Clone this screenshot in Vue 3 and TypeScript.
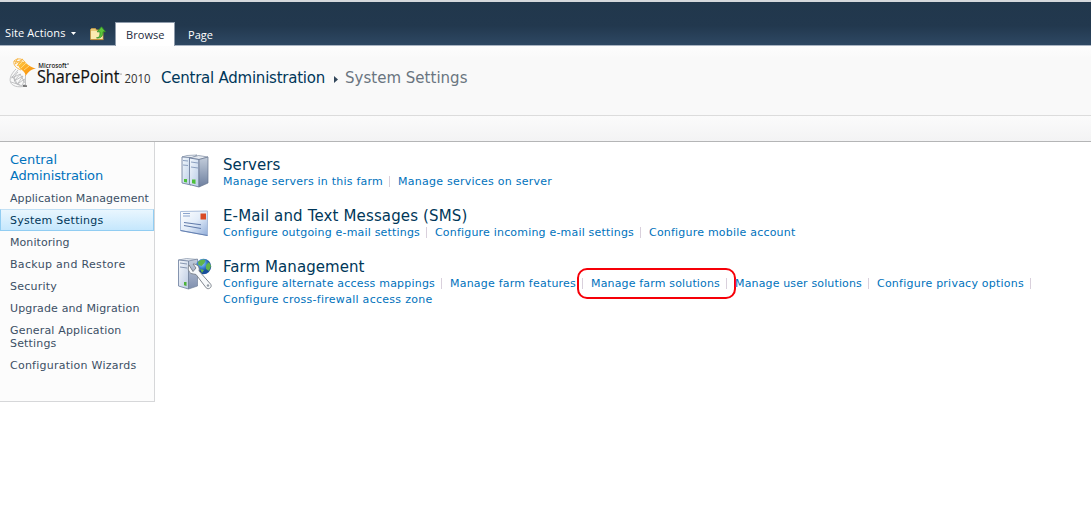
<script setup lang="ts">
import type { Directive } from 'vue'

interface Label { text: string; width: number }
interface NavItem { lines: Label[]; active?: boolean }
interface LinkItem extends Label { marked?: boolean; last?: boolean }
interface Section { icon: 'servers' | 'mail' | 'farm'; title: Label; links: LinkItem[] }

// Tracks a label out or in so that it occupies the given width.
const vFit: Directive<HTMLElement, number> = {
  mounted(el, { value }) {
    const natural = el.getBoundingClientRect().width
    const count = (el.textContent ?? '').length
    if (count > 1) el.style.letterSpacing = `${(value - natural) / count}px`
  },
}

const nav: NavItem[] = [
  { lines: [{ text: 'Application Management', width: 139 }] },
  { lines: [{ text: 'System Settings', width: 93.5 }], active: true },
  { lines: [{ text: 'Monitoring', width: 59.5 }] },
  { lines: [{ text: 'Backup and Restore', width: 115.5 }] },
  { lines: [{ text: 'Security', width: 47 }] },
  { lines: [{ text: 'Upgrade and Migration', width: 129.5 }] },
  { lines: [{ text: 'General Application', width: 111.5 }, { text: 'Settings', width: 46.5 }] },
  { lines: [{ text: 'Configuration Wizards', width: 126.5 }] },
]

const sections: Section[] = [
  {
    icon: 'servers',
    title: { text: 'Servers', width: 57.5 },
    links: [
      { text: 'Manage servers in this farm', width: 160 },
      { text: 'Manage services on server', width: 154, last: true },
    ],
  },
  {
    icon: 'mail',
    title: { text: 'E-Mail and Text Messages (SMS)', width: 244.5 },
    links: [
      { text: 'Configure outgoing e-mail settings', width: 197 },
      { text: 'Configure incoming e-mail settings', width: 199 },
      { text: 'Configure mobile account', width: 146.5, last: true },
    ],
  },
  {
    icon: 'farm',
    title: { text: 'Farm Management', width: 141.5 },
    links: [
      { text: 'Configure alternate access mappings', width: 212 },
      { text: 'Manage farm features', width: 126 },
      { text: 'Manage farm solutions', width: 129, marked: true },
      { text: 'Manage user solutions', width: 127 },
      { text: 'Configure privacy options', width: 147 },
      { text: 'Configure cross-firewall access zone', width: 209.5, last: true },
    ],
  },
]
</script>

<template>
  <div class="page">
    <header class="ribbon">
      <div class="actions">
        <span v-fit="60.5">Site Actions</span>
        <svg class="caret" width="5" height="3" viewBox="0 0 5 3"><path d="M0 0h5L2.5 3z" fill="#fff" /></svg>
      </div>
      <svg class="up" width="16" height="15" viewBox="0 0 16 15">
        <path d="M.5 3.5 1.5 2.500h4l1 1.500h6.500v9.500H.5z" fill="#e9c877" stroke="#c99c45" stroke-width=".8" />
        <path d="M1 5h11.500v8.500H1z" fill="#fbe9b0" />
        <path d="M1 13.600h12.500" stroke="#c18d35" />
        <path d="M6.500 11.800c3 .2 3.500-2 3.500-6H7.200L11.500.8l4 5H13c0 4-2 7-6.500 6z" fill="#5dc53b" stroke="#2d8d25" stroke-width=".8" />
      </svg>
      <div class="tab"><span v-fit="38.500">Browse</span></div>
      <div class="tab-plain"><span v-fit="25">Page</span></div>
    </header>

    <div class="titlebar">
      <svg class="logo" width="145" height="34" viewBox="0 0 145 34">
        <defs>
          <linearGradient id="flame" x1="0" y1="0" x2="1" y2="1">
            <stop offset="0" stop-color="#ffcf4d" /><stop offset=".5" stop-color="#fca41c" /><stop offset="1" stop-color="#f58a0a" />
          </linearGradient>
        </defs>
        <g fill="none" stroke="#b4b5b7" stroke-width=".8">
          <path d="M7 12C3 16 0 21 1.500 25s7 6 15 4" />
          <path d="M9 15c-4 4-5 8-2 11s7 3 10 1" />
          <path d="M9 13 2.500 21l9-4-6.500 7 9-5-5.500 8 7-5-2 6M2 25l9 3M3 19l5 7M11 17l5 9M16.500 18v10" />
          <path d="m14 28.800 4 .4" stroke="#444" stroke-width="1.300" />
        </g>
        <path d="M8.500 7C11 4 14 4 17 6c3 3 6 4.500 10 5.500-4 .5-7 2.500-10.500 7.500 0-2-1-4-3-5.500-3-2-4-4-5-6.500z" fill="url(#flame)" />
        <g fill="none" stroke="#f7b23c" stroke-width=".9">
          <path d="M5 4c3-3 8-3 11 1M5 4c-1 4 2 7 7 9M8.500 1.500 6 7l8-5-6 7M5 4l12 2" />
        </g>
        <path d="m10 8 4-4M12 11l5-5M15 13l5-4" fill="none" stroke="#ffe6a0" stroke-width=".7" />
        <text class="brand-small" x="29.300" y="11.300" textLength="28.500" lengthAdjust="spacingAndGlyphs">Microsoft</text>
        <circle cx="59" cy="7" r=".8" fill="#333" />
        <text class="brand" x="28" y="25.800" textLength="82.500" lengthAdjust="spacingAndGlyphs">SharePoint</text>
        <circle cx="112" cy="17" r=".6" fill="#444" />
        <text class="year" x="115.500" y="25.800" textLength="26" lengthAdjust="spacingAndGlyphs">2010</text>
      </svg>
      <div class="crumbs">
        <span v-fit="164">Central Administration</span>
        <svg class="chevron" width="4" height="7" viewBox="0 0 4 7"><path d="M0 0 4 3.500 0 7z" fill="#33475b" /></svg>
        <span v-fit="122.500" class="current">System Settings</span>
      </div>
    </div>
    <div class="toolbar"></div>

    <div class="body">
      <nav class="sidebar">
        <div class="nav-head">
          <div><span v-fit="47">Central</span></div>
          <div><span v-fit="93">Administration</span></div>
        </div>
        <div v-for="(item, i) in nav" :key="i" class="nav-item" :class="{ active: item.active }">
          <div v-for="line in item.lines" :key="line.text"><span v-fit="line.width">{{ line.text }}</span></div>
        </div>
      </nav>

      <main class="content">
        <section v-for="section in sections" :key="section.icon" class="section">
          <svg v-if="section.icon === 'servers'" class="icon" width="36" height="38" viewBox="0 0 36 38">
            <defs>
              <linearGradient id="face" x1="0" y1="0" x2="1" y2="1"><stop offset="0" stop-color="#f4f9fd" /><stop offset="1" stop-color="#b7cbe6" /></linearGradient>
              <linearGradient id="side" x1="0" y1="0" x2="0" y2="1"><stop offset="0" stop-color="#c3cddb" /><stop offset="1" stop-color="#6d7f9f" /></linearGradient>
            </defs>
            <path d="m3 5 5-1.500 10-.5-5 3z" fill="#eef2f7" stroke="#8290a6" stroke-width=".7" />
            <path d="m3 5 9 .5V33l-9-2z" fill="url(#face)" stroke="#7484a0" stroke-width=".9" />
            <path d="m12 5.500 8-2v28l-8 1.500z" fill="url(#side)" />
            <path d="m10.500 6 9-2.500 9.500 1.500-9 2.500z" fill="#e5eaf1" stroke="#7c899f" stroke-width=".7" />
            <path d="m10.500 6 9.500 1.500V35l-9.500-2.500z" fill="url(#face)" stroke="#6d7e9d" stroke-width=".9" />
            <path d="m20 7.500 9-2.500v26l-9 4z" fill="url(#side)" stroke="#65748e" stroke-width=".7" />
            <path d="m4 8.500 5 .5M4 13l5 .5M12 10l7 1M12 15l7 1" stroke="#8ba0c0" />
            <path d="M5 27h3v3.500L5 30zM13 27.500h3.500V32l-3.500-.7z" fill="#4dc03a" />
          </svg>
          <svg v-else-if="section.icon === 'mail'" class="icon" width="36" height="38" viewBox="0 0 36 38">
            <defs>
              <linearGradient id="paper" x1="0" y1="0" x2="1" y2="1"><stop offset="0" stop-color="#fff" /><stop offset=".5" stop-color="#e2ecf9" /><stop offset="1" stop-color="#91add9" /></linearGradient>
            </defs>
            <path d="m1.500 8.500 27-.5v24.500l-27-5z" fill="url(#paper)" stroke="#a9bcda" />
            <path d="m1.500 27.500 27 5" fill="none" stroke="#637fb0" stroke-width="1.200" />
            <path d="M4 10.500h7M4 13h7" stroke="#8ba4cd" />
            <path d="M21.500 10.500h5.500v6h-5.500z" fill="#d94a25" />
            <path d="m5 19.500 17 2.300M5 22.500l17 3" stroke="#617baa" stroke-width="1.100" />
          </svg>
          <svg v-else class="icon" width="36" height="38" viewBox="0 0 36 38">
            <defs>
              <radialGradient id="globe" cx=".4" cy=".3"><stop offset="0" stop-color="#9fd4ff" /><stop offset=".6" stop-color="#3d83d0" /><stop offset="1" stop-color="#184e9b" /></radialGradient>
              <linearGradient id="front" x1="0" y1="0" x2="1" y2="1"><stop offset="0" stop-color="#f5f8fc" /><stop offset="1" stop-color="#bccbe2" /></linearGradient>
              <linearGradient id="flank" x1="0" y1="0" x2="0" y2="1"><stop offset="0" stop-color="#c3cddd" /><stop offset="1" stop-color="#7f8fae" /></linearGradient>
            </defs>
            <g transform="translate(-1 3)">
              <path d="m.5 3 8-1.500 11 1-8 2z" fill="#e7ecf4" stroke="#8290a6" stroke-width=".7" />
              <path d="m.5 3 10 1v28l-10-3z" fill="url(#front)" stroke="#7889a6" stroke-width=".9" />
              <path d="m10.500 4 9-2v27l-9 3z" fill="url(#flank)" stroke="#73829b" stroke-width=".7" />
              <path d="m2 6 7 1M2 10l7 1" stroke="#8797b1" />
              <path d="M6 25h2.500v4L6 28.300z" fill="#4db23a" />
              <circle cx="25.500" cy="9.500" r="7.700" fill="url(#globe)" />
              <path d="M20 5c3-3 6-3 7.500-2l-1 3-3 3-3-1zM28 8l3-3 2 4-2 5-3-2zM22 12l4 1-2 3z" fill="#61b44b" />
              <path d="M11 8c-2 4 0 9 4.500 9l2.500.5L27.500 30c2.500 4 7.500 0 5-3L21 14c1-4-1.500-7-6-7l3 4-3 3.500z" fill="#f7f9fb" stroke="#80868f" stroke-width="1" />
              <circle cx="30" cy="28.500" r="1.200" fill="#929ba6" />
            </g>
          </svg>
          <div class="section-text">
            <h2><span v-fit="section.title.width">{{ section.title.text }}</span></h2>
            <ul>
              <li v-for="link in section.links" :key="link.text" :class="{ last: link.last, marked: link.marked }">
                <a v-fit="link.width">{{ link.text }}</a>
              </li>
            </ul>
          </div>
        </section>
      </main>
    </div>
  </div>
</template>

<style>
body { margin: 0; background: #fff; }
</style>

<style scoped>
.page {
  width: 1091px;
  height: 520px;
  overflow: hidden;
  background: #fff;
  font-family: "DejaVu Sans", sans-serif;
  font-size: 11px;
  white-space: nowrap;
}
span, a { display: inline-block; }
svg { display: block; flex: none; overflow: visible; }
.ribbon {
  box-sizing: border-box;
  height: 46px;
  display: flex;
  align-items: flex-end;
  border-top: 2px solid #d5d8dc;
  border-bottom: 1px solid #a9b4c2;
  background: linear-gradient(#21374c, #22384e 55%, #2e4863);
  color: #fff;
  font-family: "Open Sans", sans-serif;
}
.actions { display: flex; align-items: center; width: 85px; padding-left: 5px; height: 25px; }
.caret { margin-left: 5px; margin-top: 2px; }
.up { margin-bottom: 4px; }
.tab {
  box-sizing: border-box;
  width: 60px;
  height: 24px;
  margin: 0 0 -1px 9px;
  padding-left: 10px;
  border: 1px solid #8e9bab;
  border-bottom: 0;
  background: #fff;
  color: #1c2b3d;
  line-height: 23px;
}
.tab-plain { margin-left: 13px; height: 22px; line-height: 23px; }
.titlebar {
  box-sizing: border-box;
  height: 70px;
  display: flex;
  align-items: flex-start;
  padding: 11px 0 0 9px;
  border-bottom: 1px solid #dcdcdc;
  background: linear-gradient(#fdfdfd, #f9f9f9 12px);
}
.brand-small { font: 600 7px "Open Sans", sans-serif; fill: #222; }
.brand { font: 18px "Open Sans", sans-serif; fill: #111; stroke: #111; stroke-width: .2px; }
.year { font: 13px "Open Sans", sans-serif; fill: #333; }
.crumbs {
  display: flex;
  align-items: center;
  height: 20px;
  margin: 11px 0 0 7px;
  font-size: 15px;
  color: #003759;
}
.chevron { margin: 3px 7px 0 9px; }
.current { color: #6a7580; }
.toolbar {
  box-sizing: border-box;
  height: 26px;
  border-bottom: 1px solid #b4b5b6;
  background: linear-gradient(#fbfbfb, #f3f3f4);
}
.body { display: flex; align-items: flex-start; }
.sidebar {
  box-sizing: border-box;
  width: 155px;
  height: 260px;
  padding-top: 10px;
  border-right: 1px solid #d6d7d9;
  border-bottom: 1px solid #d6d7d9;
  background: #fcfcfc;
  color: #3b4f65;
}
.nav-head { padding: 0 10px; margin-bottom: 2px; height: 33px; font-size: 13px; line-height: 16px; color: #0072bc; }
.nav-item {
  box-sizing: border-box;
  min-height: 22px;
  padding: 4px 0 3px 9px;
  border: 1px solid transparent;
  line-height: 13px;
}
.nav-item.active {
  border-color: #91cdf2;
  border-top-color: #c3e1f5;
  background: linear-gradient(#e9f6fe, #c5e7fd);
  color: #003759;
}
.content { flex: 1; padding: 10px 0 0 24px; }
.section { display: flex; align-items: flex-start; margin-bottom: 3px; height: 48px; }
.icon { margin: 0 8px 0 0; }
.section-text { padding-top: 4px; }
h2 { margin: 0; height: 18px; line-height: 19px; font-size: 15px; font-weight: 400; color: #003759; }
ul { display: flex; flex-wrap: wrap; width: 840px; margin: 0; padding: 0; list-style: none; }
li { position: relative; display: flex; align-items: center; height: 16px; line-height: 16px; color: #0072bc; }
li:not(.last)::after { content: ""; width: 1px; height: 11px; margin: -1px 8px 0 6px; background: #d9d0dc; }
li.marked::before {
  content: "";
  position: absolute;
  left: -14px;
  top: -8px;
  box-sizing: border-box;
  width: 159px;
  height: 31px;
  border: 2px solid #f60008;
  border-radius: 10px;
}
</style>
